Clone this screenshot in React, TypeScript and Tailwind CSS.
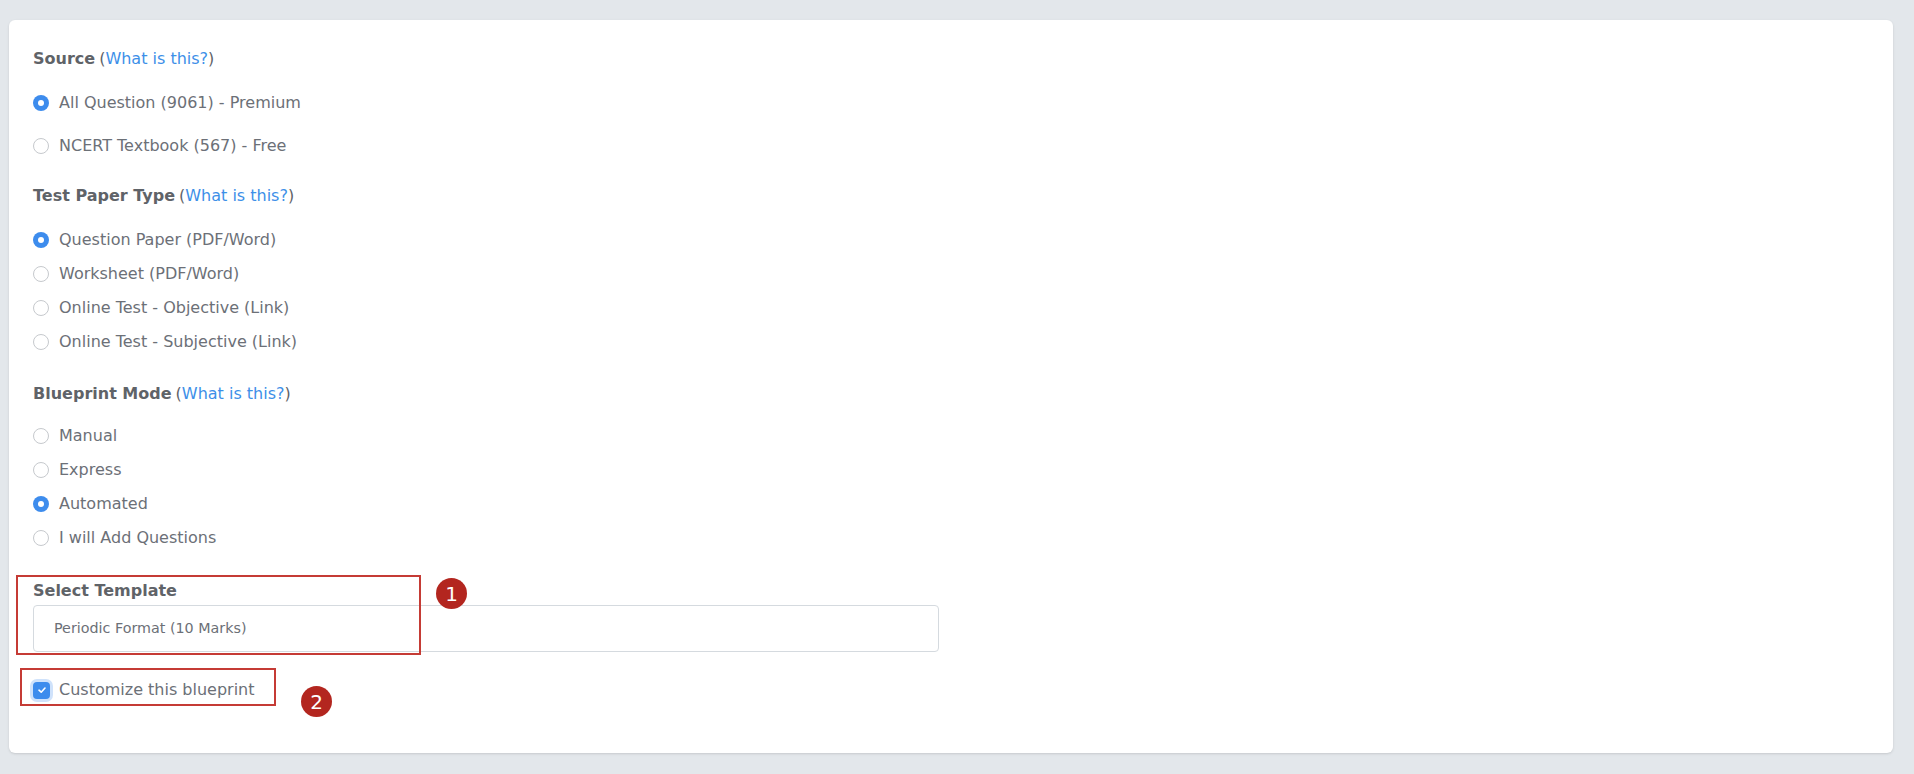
import React, { useState } from 'react';

const font = { fontFamily: '"DejaVu Sans", Inter, sans-serif' };

const Radio = ({ label, checked, onClick }: { label: string; checked: boolean; onClick: () => void }) => (
    <div className="flex items-center h-[34px] cursor-pointer" onClick={onClick}>
        {checked ? (
            <span className="w-4 h-4 rounded-full bg-[#3d8ced] flex items-center justify-center">
                <span className="w-[6px] h-[6px] rounded-full bg-white" />
            </span>
        ) : (
            <span className="w-4 h-4 rounded-full border border-[#c6c9cd] bg-white" />
        )}
        <span className="ml-[10px] text-[16px] text-[#6c7077]">{label}</span>
    </div>
);

const Heading = ({ title }: { title: string }) => (
    <div className="h-[22px] flex items-center text-[16px] text-[#5f6368]">
        <span className="font-bold">{title}</span>
        <span className="ml-1">(<a className="text-[#3d8fe8]">What is this?</a>)</span>
    </div>
);

const Badge = ({ n, className }: { n: number; className: string }) => (
    <span className={`absolute w-[31px] h-[31px] rounded-full bg-[#b3261f] text-white text-[20px] flex items-center justify-center ${className}`}>
        {n}
    </span>
);

const App: React.FC = () => {
    const [source, setSource] = useState(0);
    const [paperType, setPaperType] = useState(0);
    const [mode, setMode] = useState(2);
    const [customize, setCustomize] = useState(true);

    const sources = ['All Question (9061) - Premium', 'NCERT Textbook (567) - Free'];
    const paperTypes = ['Question Paper (PDF/Word)', 'Worksheet (PDF/Word)', 'Online Test - Objective (Link)', 'Online Test - Subjective (Link)'];
    const modes = ['Manual', 'Express', 'Automated', 'I will Add Questions'];

    return (
        <div className="min-h-screen bg-[#e3e7eb] pt-5 pl-[9px] pr-[21px] pb-[22px]" style={font}>
            <div className="bg-white rounded-md shadow-sm pt-[28px] pb-[45px] px-6 h-[733px]">
                <Heading title="Source" />
                <div className="mt-4">
                    <Radio label={sources[0]} checked={source === 0} onClick={() => setSource(0)} />
                </div>
                <div className="mt-[9px]">
                    <Radio label={sources[1]} checked={source === 1} onClick={() => setSource(1)} />
                </div>

                <div className="mt-[22px]">
                    <Heading title="Test Paper Type" />
                </div>
                <div className="mt-4">
                    {paperTypes.map((p, i) => (
                        <Radio key={p} label={p} checked={paperType === i} onClick={() => setPaperType(i)} />
                    ))}
                </div>

                <div className="mt-6">
                    <Heading title="Blueprint Mode" />
                </div>
                <div className="mt-[14px]">
                    {modes.map((m, i) => (
                        <Radio key={m} label={m} checked={mode === i} onClick={() => setMode(i)} />
                    ))}
                </div>

                <div className="relative mt-[25px] w-[906px]">
                    <div className="h-[22px] flex items-center text-[16px] font-bold text-[#5f6368]">Select Template</div>
                    <div className="mt-[3px] h-[47px] border border-[#d5dadf] rounded flex items-center pl-5 text-[14.3px] text-[#6c7077]">
                        Periodic Format (10 Marks)
                    </div>
                    <div className="absolute left-[-17px] top-[-5px] w-[405px] h-[80px] border-2 border-[#c53b35] pointer-events-none" />
                    <Badge n={1} className="left-[403px] top-[-2px]" />
                </div>

                <div className="relative mt-[21px] h-[34px] flex items-center w-fit cursor-pointer" onClick={() => setCustomize(!customize)}>
                    <span className={`w-[17px] h-[17px] rounded-[4px] flex items-center justify-center ring-[3px] ring-[#cfe2fb] ${customize ? 'bg-[#3d8ced]' : 'bg-white border border-[#c6c9cd]'}`}>
                        {customize && (
                            <svg width="10" height="10" viewBox="0 0 10 10" fill="none">
                                <path d="M2 5.2 L4.2 7.2 L8 3" stroke="white" strokeWidth="1.6" strokeLinecap="round" strokeLinejoin="round" />
                            </svg>
                        )}
                    </span>
                    <span className="ml-[9px] text-[16px] text-[#6c7077]">Customize this blueprint</span>
                    <div className="absolute left-[-13px] top-[-5px] w-[256px] h-[38px] border-2 border-[#c53b35] pointer-events-none" />
                    <Badge n={2} className="left-[268px] top-[13px]" />
                </div>
            </div>
        </div>
    );
};

export default App;
